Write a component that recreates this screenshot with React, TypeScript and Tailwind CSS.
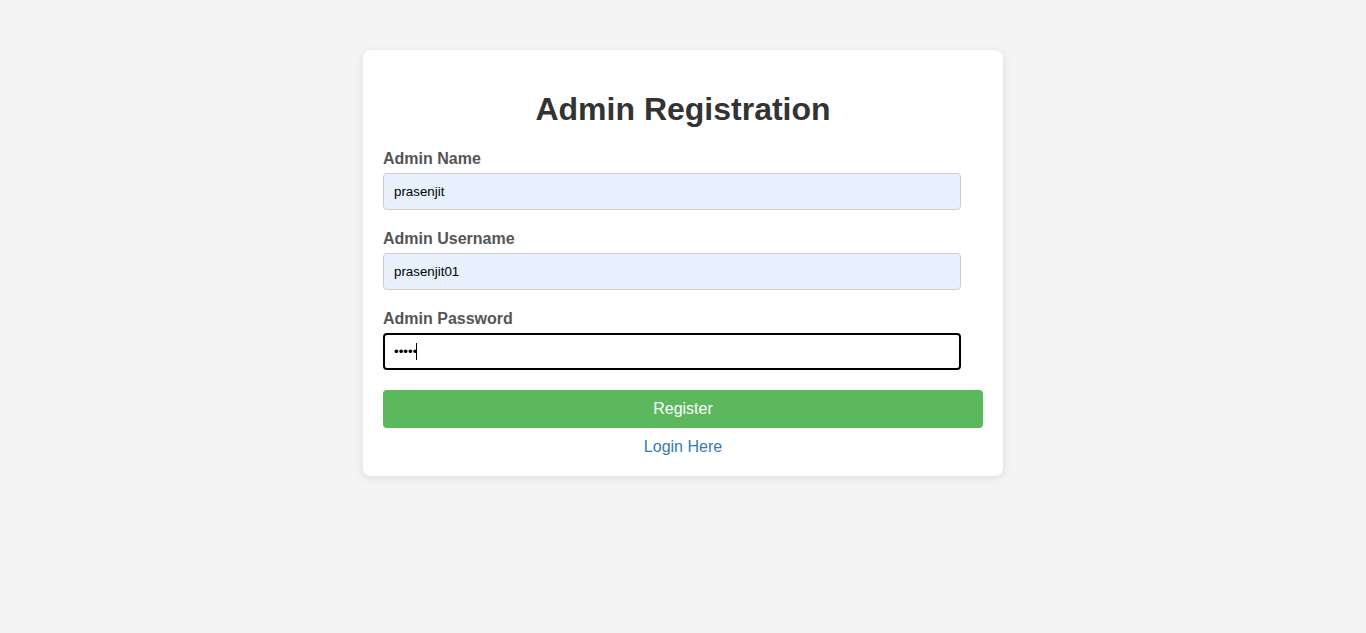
import React from "react";

const inputCls =
  "block w-[578px] h-[37px] px-[10px] rounded-[4px] border border-[#cccccc] bg-[#e8f0fe] text-[13.33px] text-black outline-none";

export default function App() {
  return (
    <div className="min-h-[633px] bg-[#f4f4f4] pt-[50px] flex justify-center font-['Liberation_Sans',Arial,sans-serif]">
      <div className="w-[640px] h-[426px] bg-white rounded-[8px] shadow-[0_2px_10px_rgba(0,0,0,0.1)] p-[20px] self-start">
        <h1 className="mt-[21px] mb-[22px] text-[32px] leading-[37px] font-bold text-[#333333] text-center">
          Admin Registration
        </h1>
        <form onSubmit={(e) => e.preventDefault()}>
          <label className="block mb-[5px] text-[16px] leading-[18px] font-bold text-[#555555]">
            Admin Name
          </label>
          <input className={inputCls} defaultValue="prasenjit" />

          <label className="block mt-[20px] mb-[5px] text-[16px] leading-[18px] font-bold text-[#555555]">
            Admin Username
          </label>
          <input className={inputCls} defaultValue="prasenjit01" />

          <label className="block mt-[20px] mb-[5px] text-[16px] leading-[18px] font-bold text-[#555555]">
            Admin Password
          </label>
          <div className="relative w-[578px]">
            <input
              type="password"
              className="block w-[578px] h-[37px] px-[9px] rounded-[4px] border-2 border-black bg-white text-[13.33px] text-black outline-none"
              defaultValue="admin"
            />
            {/* caret */}
            <div className="absolute left-[33px] top-[10px] w-px h-[17px] bg-black" />
          </div>

          <button
            type="submit"
            className="block w-[600px] h-[38px] mt-[20px] rounded-[4px] bg-[#5cb85c] text-white text-[16px]"
          >
            Register
          </button>
          <div className="mt-[10px] text-center text-[16px] leading-[18px]">
            <a href="#" className="text-[#337ab7]">
              Login Here
            </a>
          </div>
        </form>
      </div>
    </div>
  );
}
